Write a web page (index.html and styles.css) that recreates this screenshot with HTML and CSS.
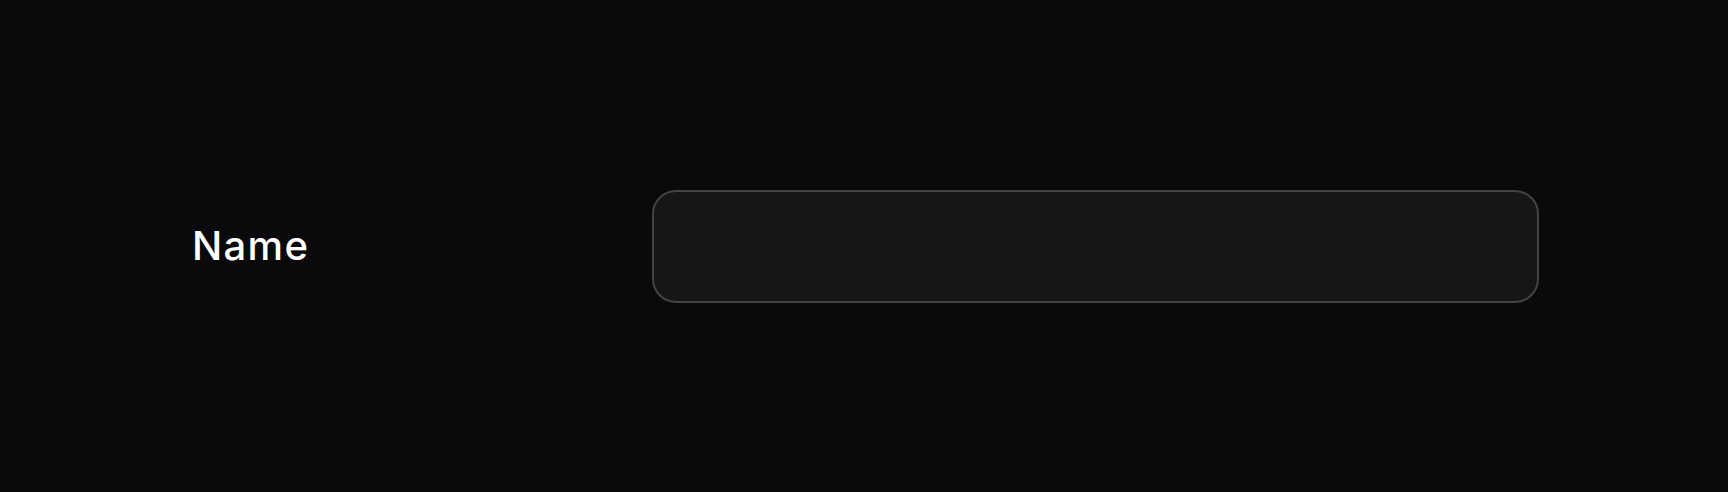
FILE: index.html
```html
<!DOCTYPE html>
<html lang="en">
<head>
<meta charset="utf-8">
<title>Name</title>
<link rel="stylesheet" href="styles.css">
</head>
<body>
<main class="page">
  <form class="form-row">
    <label class="field-label" for="name">Name</label>
    <input class="field-input" id="name" type="text">
  </form>
</main>
</body>
</html>
```
FILE: styles.css
```css
html, body {
  margin: 0;
  padding: 0;
  background: #0a0a0c;
}
.page {
  height: 100vh;
  display: flex;
  align-items: center;
  box-sizing: border-box;
  padding-left: 192px;
}
.form-row {
  display: grid;
  grid-template-columns: 460px 887px;
  align-items: center;
  margin: 0;
}
.field-label {
  font-family: "Inter", "Liberation Sans", sans-serif;
  font-size: 40px;
  font-weight: 500;
  letter-spacing: 1.3px;
  color: #ffffff;
  line-height: 1;
}
.field-input {
  box-sizing: border-box;
  width: 887px;
  height: 113px;
  background: #161618;
  border: 2.5px solid #434346;
  border-radius: 24px;
  outline: none;
  margin: 0;
  padding: 0 24px;
  color: #fff;
  font-family: "Inter", sans-serif;
  font-size: 32px;
}
```
